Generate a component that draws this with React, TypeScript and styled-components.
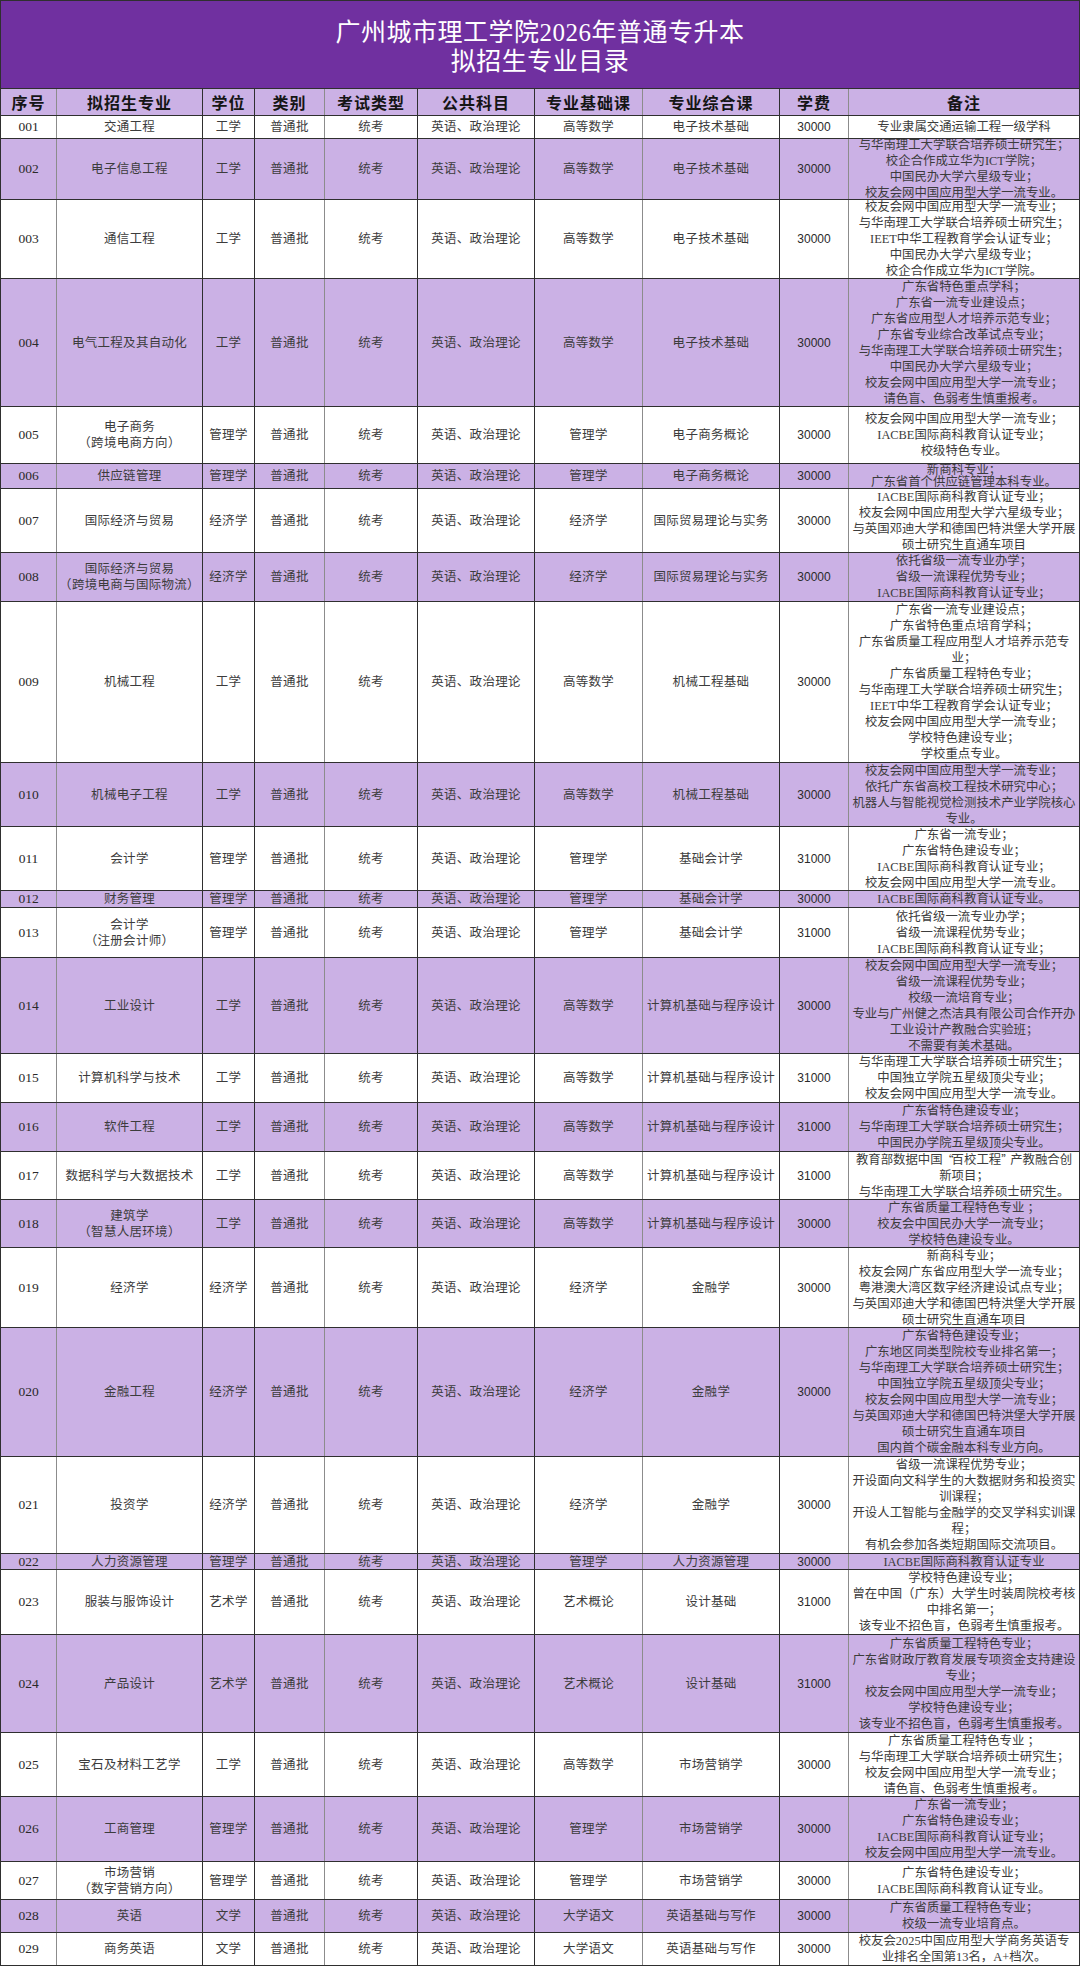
import React from "react";
import styled, { createGlobalStyle } from "styled-components";

const GlobalStyle = createGlobalStyle`
  html, body { margin: 0; padding: 0; background: #ffffff; }
  body { font-family: "Liberation Serif", "Noto Sans CJK SC", serif; }
  #root { width: 1080px; }
`;

const COLS = "57px 146px 52px 70px 93px 117px 108px 137px 69px 231px";
const DARK = "#2f2f2f";
const GREY = "#8c8c8c";
const LINES = [GREY, DARK, DARK, GREY, DARK, DARK, GREY, DARK, GREY, DARK];
const SHADE = "#cbb1e5";

const Sheet = styled.div`
  width: 1080px;
  box-sizing: border-box;
  display: flex;
  flex-direction: column;
`;

const TitleBar = styled.div`
  height: 89px;
  box-sizing: border-box;
  background: #7030a0;
  border: 1px solid ${DARK};
  display: flex;
  flex-direction: column;
  align-items: center;
  justify-content: center;
  padding-top: 4px;
  color: #ffffff;
  font-family: "Liberation Serif", "Noto Sans CJK SC", serif;
  font-size: 25px;
  line-height: 29px;
  letter-spacing: 0.5px;
`;

const TitleLine = styled.div`
  white-space: nowrap;
`;

const Row = styled.div<{ $h: number; $shaded: boolean }>`
  display: grid;
  grid-template-columns: ${COLS};
  height: ${(p) => p.$h}px;
  box-sizing: border-box;
  border-bottom: 1px solid ${DARK};
  background: ${(p) => (p.$shaded ? SHADE : "#ffffff")};
`;

type Kind = "head" | "index" | "text" | "fee" | "note";

const FONTS: Record<Kind, string> = {
  head: `font-size: 16px; font-weight: 700; color: #151515; letter-spacing: 1px; font-family: "Noto Sans CJK SC", sans-serif;`,
  index: `font-size: 13.5px; color: #2a2a2a; font-family: "Liberation Serif", "Noto Sans CJK SC", serif;`,
  text: `font-size: 12.5px; color: #3c3c3c; letter-spacing: 0.3px; font-family: "Liberation Serif", "Noto Sans CJK SC", serif;`,
  fee: `font-size: 12px; color: #2a2a2a; font-family: "Liberation Sans", "Noto Sans CJK SC", sans-serif;`,
  note: `font-size: 12.4px; color: #3c3c3c; font-family: "Liberation Serif", "Noto Sans CJK SC", serif;`,
};

const Cell = styled.div<{ $line: string; $first?: boolean; $kind: Kind; $lh?: number }>`
  box-sizing: border-box;
  min-width: 0;
  overflow: hidden;
  display: flex;
  flex-direction: column;
  align-items: center;
  justify-content: center;
  text-align: center;
  line-height: ${(p) => p.$lh ?? 16}px;
  border-right: 1px solid ${(p) => p.$line};
  border-left: ${(p) => (p.$first ? `1px solid ${DARK}` : "none")};
  ${(p) => FONTS[p.$kind]}
`;

const Line = styled.span`
  display: block;
  white-space: nowrap;
`;

const WideMark = styled.span`
  font-family: "Noto Sans CJK SC", sans-serif;
  font-size: 11px;
  letter-spacing: -2px;
`;

type Major = {
  no: string;
  name: string[];
  degree: string;
  base: string;
  comp: string;
  fee: string;
  notes: string[];
  h: number;
  lh?: number;
};

const HEADERS = ["序号", "拟招生专业", "学位", "类别", "考试类型", "公共科目", "专业基础课", "专业综合课", "学费", "备注"];

const DATA: Major[] = [
  { no: "001", h: 23, name: ["交通工程"], degree: "工学", base: "高等数学", comp: "电子技术基础", fee: "30000", notes: ["专业隶属交通运输工程一级学科"] },
  { no: "002", h: 61, name: ["电子信息工程"], degree: "工学", base: "高等数学", comp: "电子技术基础", fee: "30000", notes: ["与华南理工大学联合培养硕士研究生；", "校企合作成立华为ICT学院；", "中国民办大学六星级专业；", "校友会网中国应用型大学一流专业。"] },
  { no: "003", h: 79, name: ["通信工程"], degree: "工学", base: "高等数学", comp: "电子技术基础", fee: "30000", notes: ["校友会网中国应用型大学一流专业；", "与华南理工大学联合培养硕士研究生；", "IEET中华工程教育学会认证专业；", "中国民办大学六星级专业；", "校企合作成立华为ICT学院。"] },
  { no: "004", h: 128, name: ["电气工程及其自动化"], degree: "工学", base: "高等数学", comp: "电子技术基础", fee: "30000", notes: ["广东省特色重点学科；", "广东省一流专业建设点；", "广东省应用型人才培养示范专业；", "广东省专业综合改革试点专业；", "与华南理工大学联合培养硕士研究生；", "中国民办大学六星级专业；", "校友会网中国应用型大学一流专业；", "请色盲、色弱考生慎重报考。"] },
  { no: "005", h: 57, name: ["电子商务", "（跨境电商方向）"], degree: "管理学", base: "管理学", comp: "电子商务概论", fee: "30000", notes: ["校友会网中国应用型大学一流专业；", "IACBE国际商科教育认证专业；", "校级特色专业。"] },
  { no: "006", h: 25, lh: 12, name: ["供应链管理"], degree: "管理学", base: "管理学", comp: "电子商务概论", fee: "30000", notes: ["新商科专业；", "广东省首个供应链管理本科专业。"] },
  { no: "007", h: 64, name: ["国际经济与贸易"], degree: "经济学", base: "经济学", comp: "国际贸易理论与实务", fee: "30000", notes: ["IACBE国际商科教育认证专业；", "校友会网中国应用型大学六星级专业；", "与英国邓迪大学和德国巴特洪堡大学开展", "硕士研究生直通车项目"] },
  { no: "008", h: 49, name: ["国际经济与贸易", "（跨境电商与国际物流）"], degree: "经济学", base: "经济学", comp: "国际贸易理论与实务", fee: "30000", notes: ["依托省级一流专业办学；", "省级一流课程优势专业；", "IACBE国际商科教育认证专业；"] },
  { no: "009", h: 161, name: ["机械工程"], degree: "工学", base: "高等数学", comp: "机械工程基础", fee: "30000", notes: ["广东省一流专业建设点；", "广东省特色重点培育学科；", "广东省质量工程应用型人才培养示范专", "业；", "广东省质量工程特色专业；", "与华南理工大学联合培养硕士研究生；", "IEET中华工程教育学会认证专业；", "校友会网中国应用型大学一流专业；", "学校特色建设专业；", "学校重点专业。"] },
  { no: "010", h: 64, name: ["机械电子工程"], degree: "工学", base: "高等数学", comp: "机械工程基础", fee: "30000", notes: ["校友会网中国应用型大学一流专业；", "依托广东省高校工程技术研究中心；", "机器人与智能视觉检测技术产业学院核心", "专业。"] },
  { no: "011", h: 64, name: ["会计学"], degree: "管理学", base: "管理学", comp: "基础会计学", fee: "31000", notes: ["广东省一流专业；", "广东省特色建设专业；", "IACBE国际商科教育认证专业；", "校友会网中国应用型大学一流专业。"] },
  { no: "012", h: 17, name: ["财务管理"], degree: "管理学", base: "管理学", comp: "基础会计学", fee: "30000", notes: ["IACBE国际商科教育认证专业。"] },
  { no: "013", h: 50, name: ["会计学", "（注册会计师）"], degree: "管理学", base: "管理学", comp: "基础会计学", fee: "31000", notes: ["依托省级一流专业办学；", "省级一流课程优势专业；", "IACBE国际商科教育认证专业；"] },
  { no: "014", h: 96, name: ["工业设计"], degree: "工学", base: "高等数学", comp: "计算机基础与程序设计", fee: "30000", notes: ["校友会网中国应用型大学一流专业；", "省级一流课程优势专业；", "校级一流培育专业；", "专业与广州健之杰洁具有限公司合作开办", "工业设计产教融合实验班；", "不需要有美术基础。"] },
  { no: "015", h: 49, name: ["计算机科学与技术"], degree: "工学", base: "高等数学", comp: "计算机基础与程序设计", fee: "31000", notes: ["与华南理工大学联合培养硕士研究生；", "中国独立学院五星级顶尖专业；", "校友会网中国应用型大学一流专业。"] },
  { no: "016", h: 49, name: ["软件工程"], degree: "工学", base: "高等数学", comp: "计算机基础与程序设计", fee: "31000", notes: ["广东省特色建设专业；", "与华南理工大学联合培养硕士研究生；", "中国民办学院五星级顶尖专业。"] },
  { no: "017", h: 48, name: ["数据科学与大数据技术"], degree: "工学", base: "高等数学", comp: "计算机基础与程序设计", fee: "31000", notes: ["教育部数据中国“百校工程”产教融合创", "新项目；", "与华南理工大学联合培养硕士研究生。"] },
  { no: "018", h: 48, name: ["建筑学", "（智慧人居环境）"], degree: "工学", base: "高等数学", comp: "计算机基础与程序设计", fee: "30000", notes: ["广东省质量工程特色专业 ；", "校友会中国民办大学一流专业；", "学校特色建设专业。"] },
  { no: "019", h: 80, name: ["经济学"], degree: "经济学", base: "经济学", comp: "金融学", fee: "30000", notes: ["新商科专业；", "校友会网广东省应用型大学一流专业；", "粤港澳大湾区数字经济建设试点专业；", "与英国邓迪大学和德国巴特洪堡大学开展", "硕士研究生直通车项目"] },
  { no: "020", h: 129, name: ["金融工程"], degree: "经济学", base: "经济学", comp: "金融学", fee: "30000", notes: ["广东省特色建设专业；", "广东地区同类型院校专业排名第一；", "与华南理工大学联合培养硕士研究生；", "中国独立学院五星级顶尖专业；", "校友会网中国应用型大学一流专业；", "与英国邓迪大学和德国巴特洪堡大学开展", "硕士研究生直通车项目", "国内首个碳金融本科专业方向。"] },
  { no: "021", h: 97, name: ["投资学"], degree: "经济学", base: "经济学", comp: "金融学", fee: "30000", notes: ["省级一流课程优势专业；", "开设面向文科学生的大数据财务和投资实", "训课程；", "开设人工智能与金融学的交叉学科实训课", "程；", "有机会参加各类短期国际交流项目。"] },
  { no: "022", h: 16, name: ["人力资源管理"], degree: "管理学", base: "管理学", comp: "人力资源管理", fee: "30000", notes: ["IACBE国际商科教育认证专业"] },
  { no: "023", h: 65, name: ["服装与服饰设计"], degree: "艺术学", base: "艺术概论", comp: "设计基础", fee: "31000", notes: ["学校特色建设专业；", "曾在中国（广东）大学生时装周院校考核", "中排名第一；", "该专业不招色盲，色弱考生慎重报考。"] },
  { no: "024", h: 98, name: ["产品设计"], degree: "艺术学", base: "艺术概论", comp: "设计基础", fee: "31000", notes: ["广东省质量工程特色专业；", "广东省财政厅教育发展专项资金支持建设", "专业；", "校友会网中国应用型大学一流专业；", "学校特色建设专业；", "该专业不招色盲，色弱考生慎重报考。"] },
  { no: "025", h: 64, name: ["宝石及材料工艺学"], degree: "工学", base: "高等数学", comp: "市场营销学", fee: "30000", notes: ["广东省质量工程特色专业 ；", "与华南理工大学联合培养硕士研究生；", "校友会网中国应用型大学一流专业；", "请色盲、色弱考生慎重报考。"] },
  { no: "026", h: 65, name: ["工商管理"], degree: "管理学", base: "管理学", comp: "市场营销学", fee: "30000", notes: ["广东省一流专业；", "广东省特色建设专业；", "IACBE国际商科教育认证专业；", "校友会网中国应用型大学一流专业。"] },
  { no: "027", h: 38, name: ["市场营销", "（数字营销方向）"], degree: "管理学", base: "管理学", comp: "市场营销学", fee: "30000", notes: ["广东省特色建设专业；", "IACBE国际商科教育认证专业。"] },
  { no: "028", h: 33, name: ["英语"], degree: "文学", base: "大学语文", comp: "英语基础与写作", fee: "30000", notes: ["广东省质量工程特色专业；", "校级一流专业培育点。"] },
  { no: "029", h: 33, name: ["商务英语"], degree: "文学", base: "大学语文", comp: "英语基础与写作", fee: "30000", notes: ["校友会2025中国应用型大学商务英语专", "业排名全国第13名，A+档次。"] },
];

const renderText = (t: string) =>
  t.split(/([“”])/).map((part, i) =>
    part === "“" || part === "”" ? <WideMark key={i}>{part}</WideMark> : <React.Fragment key={i}>{part}</React.Fragment>
  );

const Lines: React.FC<{ items: string[] }> = ({ items }) => (
  <>
    {items.map((t, i) => (
      <Line key={i}>{renderText(t)}</Line>
    ))}
  </>
);

export default function App() {
  return (
    <>
      <GlobalStyle />
      <Sheet>
        <TitleBar>
          <TitleLine>广州城市理工学院2026年普通专升本</TitleLine>
          <TitleLine>拟招生专业目录</TitleLine>
        </TitleBar>
        <Row $h={27} $shaded>
          {HEADERS.map((h, i) => (
            <Cell key={h} $kind="head" $line={LINES[i]} $first={i === 0}>
              {h}
            </Cell>
          ))}
        </Row>
        {DATA.map((r, idx) => {
          const shaded = idx % 2 === 1;
          return (
            <Row key={r.no} $h={r.h} $shaded={shaded}>
              <Cell $kind="index" $line={LINES[0]} $first>{r.no}</Cell>
              <Cell $kind="text" $line={LINES[1]}><Lines items={r.name} /></Cell>
              <Cell $kind="text" $line={LINES[2]}>{r.degree}</Cell>
              <Cell $kind="text" $line={LINES[3]}>普通批</Cell>
              <Cell $kind="text" $line={LINES[4]}>统考</Cell>
              <Cell $kind="text" $line={LINES[5]}>英语、政治理论</Cell>
              <Cell $kind="text" $line={LINES[6]}>{r.base}</Cell>
              <Cell $kind="text" $line={LINES[7]}>{r.comp}</Cell>
              <Cell $kind="fee" $line={LINES[8]}>{r.fee}</Cell>
              <Cell $kind="note" $line={LINES[9]} $lh={r.lh}><Lines items={r.notes} /></Cell>
            </Row>
          );
        })}
      </Sheet>
    </>
  );
}
